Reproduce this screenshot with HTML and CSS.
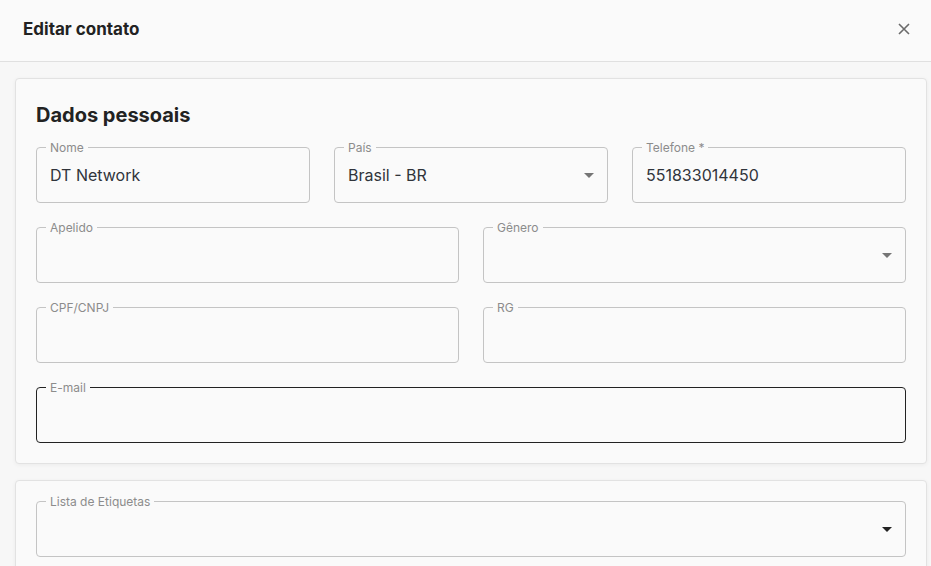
FILE: index.html
```html
<!DOCTYPE html>
<html lang="pt-BR">
<head>
  <meta charset="UTF-8" />
  <meta name="viewport" content="width=device-width, initial-scale=1.0" />
  <title>Editar contato</title>
  <link rel="stylesheet" href="styles.css">
</head>
<body>
  <div class="modal">
    <header class="modal-header">
      <h2>Editar contato</h2>
      <button class="close" aria-label="Fechar">
        <svg width="12" height="12" viewBox="0 0 12 12">
          <path d="M1 1 L11 11 M11 1 L1 11" stroke="#6b6b6b" stroke-width="1.6" fill="none" />
        </svg>
      </button>
    </header>

    <div class="modal-body">
      <section class="card">
        <h3>Dados pessoais</h3>

        <div class="row">
          <div class="field">
            <label>Nome</label>
            <input type="text" value="DT Network" />
          </div>
          <div class="field select">
            <label>País</label>
            <span class="value">Brasil - BR</span>
            <span class="arrow"></span>
          </div>
          <div class="field">
            <label>Telefone *</label>
            <input type="text" value="551833014450" />
          </div>
        </div>

        <div class="row">
          <div class="field">
            <label>Apelido</label>
            <input type="text" />
          </div>
          <div class="field select">
            <label>Gênero</label>
            <span class="value"></span>
            <span class="arrow"></span>
          </div>
        </div>

        <div class="row">
          <div class="field">
            <label>CPF/CNPJ</label>
            <input type="text" />
          </div>
          <div class="field">
            <label>RG</label>
            <input type="text" />
          </div>
        </div>

        <div class="row">
          <div class="field focused">
            <label>E-mail</label>
            <input type="text" />
          </div>
        </div>
      </section>

      <section class="card">
        <div class="row">
          <div class="field select">
            <label>Lista de Etiquetas</label>
            <span class="value"></span>
            <span class="arrow dark"></span>
          </div>
        </div>
      </section>
    </div>
  </div>
</body>
</html>
```

FILE: styles.css
```css
* {
  box-sizing: border-box;
  margin: 0;
  padding: 0;
}

body {
  background-color: #f7f7f7;
  color: #222;
  font-family: Inter, "Noto Sans", Arial, sans-serif;
  height: 566px;
  overflow: hidden;
}

.modal-header {
  height: 62px;
  background-color: #fafafa;
  border-bottom: 1px solid #e0e0e0;
  display: flex;
  align-items: center;
  justify-content: space-between;
  padding: 0 21px 0 23px;
}

.modal-header h2 {
  font-size: 17px;
  font-weight: 700;
  color: #222;
  margin-top: -4px;
}

.close {
  background: none;
  border: none;
  cursor: pointer;
  display: flex;
  margin-top: -3px;
}

.modal-body {
  padding: 16px 4px 0 15px;
  display: flex;
  flex-direction: column;
  gap: 16px;
}

.card {
  background-color: #fafafa;
  border: 1px solid #e2e2e2;
  border-radius: 4px;
  box-shadow: 0 1px 4px rgba(0, 0, 0, 0.05);
  padding: 20px;
  display: flex;
  flex-direction: column;
  gap: 24px;
}

.card h3 {
  font-size: 20px;
  font-weight: 700;
  color: #222;
  line-height: 28px;
  margin-top: 2px;
  margin-bottom: -6px;
}

.row {
  display: flex;
  gap: 24px;
}

.field {
  position: relative;
  flex: 1;
  height: 56px;
  border: 1px solid #c4c4c4;
  border-radius: 4px;
  display: flex;
  align-items: center;
  padding: 0 13px;
}

.field label {
  position: absolute;
  top: -8px;
  left: 9px;
  padding: 0 4px;
  background-color: #fafafa;
  font-size: 12px;
  line-height: 16px;
  color: #8c8c8c;
}

.field input {
  width: 100%;
  border: none;
  outline: none;
  background: transparent;
  font-family: inherit;
  font-size: 16px;
  color: #30343b;
}

.field.focused {
  border-color: #222;
  border-width: 1.5px;
}

.select .value {
  flex: 1;
  font-size: 16px;
  color: #30343b;
}

.arrow {
  width: 0;
  height: 0;
  border-left: 5px solid transparent;
  border-right: 5px solid transparent;
  border-top: 5px solid #757575;
}

.arrow.dark {
  border-top-color: #222;
}
```
